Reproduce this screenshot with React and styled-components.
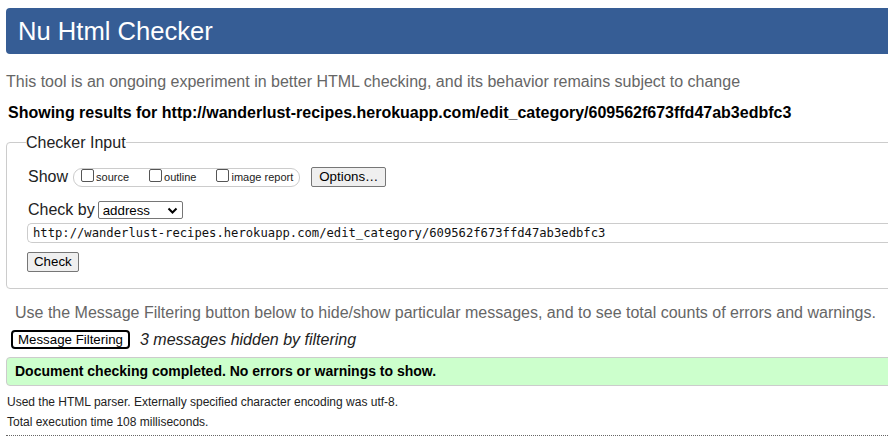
import React from "react";
import styled, { createGlobalStyle } from "styled-components";

const Global = createGlobalStyle`
  html, body { margin: 0; padding: 0; overflow: hidden; background: #fff; }
  body { font-family: "Liberation Sans", Arial, sans-serif; color: #000; }
`;

const Page = styled.div`
  width: 960px;
  padding: 8px 0 0 6px;
  display: flex;
  flex-direction: column;
`;

const Header = styled.h1`
  margin: 0;
  height: 46px;
  line-height: 46px;
  padding-left: 12px;
  background: #365d95;
  color: #fff;
  font-weight: normal;
  font-size: 25.6px;
  border-radius: 4px;
`;

const Intro = styled.p`
  margin: ${(p) => p.$mt || 18}px 0 0 ${(p) => p.$indent || 0}px;
  font-size: 16px;
  line-height: 19px;
  color: #666;
`;

const Results = styled.h2`
  margin: 12px 0 0 2px;
  font-size: 16px;
  line-height: 19px;
  font-weight: bold;
`;

const Fieldset = styled.fieldset`
  margin: 11px 0 0 0;
  padding: 7px 21px 16px 20px;
  border: 1px solid #ccc;
  border-radius: 4px;
  display: flex;
  flex-direction: column;
  align-items: flex-start;
`;

const Legend = styled.legend`
  padding: 0;
  margin-left: -1px;
  font-size: 16px;
  line-height: 19px;
  color: #222;
`;

const Row = styled.div`
  display: flex;
  align-items: center;
  margin-top: ${(p) => p.$mt || 0}px;
  align-self: stretch;
`;

const Label = styled.span`
  font-size: 16px;
  color: #222;
  margin-left: 1px;
`;

const Group = styled.span`
  display: inline-flex;
  align-items: center;
  height: 17px;
  border: 1px solid #ccc;
  border-radius: 9px;
  margin-left: 5px;
  padding: 0 6px 0 7px;
  gap: 20px;
`;

const CheckItem = styled.label`
  display: inline-flex;
  align-items: center;
  font-size: 11px;
  color: #222;
  gap: 2px;
`;

const Box = styled.span`
  width: 11px;
  height: 11px;
  border: 1px solid #555;
  border-radius: 2px;
  background: #fff;
  margin-top: -3px;
`;

const Button = styled.button`
  font-family: "Liberation Sans", Arial, sans-serif;
  font-size: 13.3px;
  height: 20px;
  padding: 0 ${(p) => p.$px || 6}px;
  background: #efefef;
  color: #000;
  border: 1px solid #767676;
  border-radius: 2px;
  margin-left: ${(p) => p.$ml || 0}px;
  margin-top: ${(p) => p.$mt || 0}px;
  line-height: 18px;
`;

const FocusButton = styled(Button)`
  height: 19px;
  background: #fff;
  border: 2px solid #000;
  border-radius: 4px;
  padding: 0 5px;
  line-height: 15px;
`;

const Select = styled.span`
  display: inline-flex;
  align-items: center;
  justify-content: space-between;
  height: 16px;
  border: 1px solid #767676;
  border-radius: 2px;
  margin-left: 3px;
  padding: 0 4px 0 4px;
  box-sizing: content-box;
  width: 75px;
  font-size: 13.3px;
  color: #000;
`;

const UrlInput = styled.div`
  margin-top: 4px;
  align-self: stretch;
  height: 18px;
  border: 1px solid #ccc;
  border-right: none;
  border-radius: 5px 0 0 5px;
  padding-left: 5px;
  font-family: "DejaVu Sans Mono", "Liberation Mono", monospace;
  font-size: 12.2px;
  line-height: 18px;
  color: #111;
  margin-right: -21px;
`;

const FilterRow = styled.div`
  display: flex;
  align-items: center;
  margin: 8px 0 0 5px;
`;

const Hidden = styled.em`
  margin-left: 10px;
  font-size: 16px;
  color: #222;
`;

const Success = styled.div`
  margin-top: 8px;
  height: 27px;
  line-height: 27px;
  background: #ccffcc;
  border: 1px solid #ccc;
  border-radius: 4px;
  padding-left: 8px;
  font-weight: bold;
  font-size: 14px;
`;

const Small = styled.p`
  margin: ${(p) => p.$mt || 0}px 0 0 1px;
  font-size: 12px;
  line-height: 14px;
  color: #222;
`;

const Rule = styled.hr`
  margin: 6px 0 0 0;
  border: none;
  border-top: 1px dotted #666;
`;

const Chevron = () => (
  <svg width="11" height="7" viewBox="0 0 11 7">
    <path d="M1.5 1.5 L5.5 5.5 L9.5 1.5" fill="none" stroke="#000" strokeWidth="2" />
  </svg>
);

export default function App() {
  return (
    <>
      <Global />
      <Page>
        <Header>Nu Html Checker</Header>
        <Intro>
          This tool is an ongoing experiment in better HTML checking, and its behavior remains subject to change
        </Intro>
        <Results>
          Showing results for http://wanderlust-recipes.herokuapp.com/edit_category/609562f673ffd47ab3edbfc3
        </Results>
        <Fieldset>
          <Legend>Checker Input</Legend>
          <Row $mt={8}>
            <Label>Show</Label>
            <Group>
              <CheckItem><Box />source</CheckItem>
              <CheckItem><Box />outline</CheckItem>
              <CheckItem><Box />image report</CheckItem>
            </Group>
            <Button $ml={11} $px={7}>Options…</Button>
          </Row>
          <Row $mt={14}>
            <Label>Check by</Label>
            <Select>address <Chevron /></Select>
          </Row>
          <UrlInput>http://wanderlust-recipes.herokuapp.com/edit_category/609562f673ffd47ab3edbfc3</UrlInput>
          <Button $mt={9}>Check</Button>
        </Fieldset>
        <Intro $indent={9} $mt={14}>
          Use the Message Filtering button below to hide/show particular messages, and to see total counts of errors and warnings.
        </Intro>
        <FilterRow>
          <FocusButton>Message Filtering</FocusButton>
          <Hidden>3 messages hidden by filtering</Hidden>
        </FilterRow>
        <Success>Document checking completed. No errors or warnings to show.</Success>
        <Small $mt={9}>Used the HTML parser. Externally specified character encoding was utf-8.</Small>
        <Small $mt={6}>Total execution time 108 milliseconds.</Small>
        <Rule />
      </Page>
    </>
  );
}
